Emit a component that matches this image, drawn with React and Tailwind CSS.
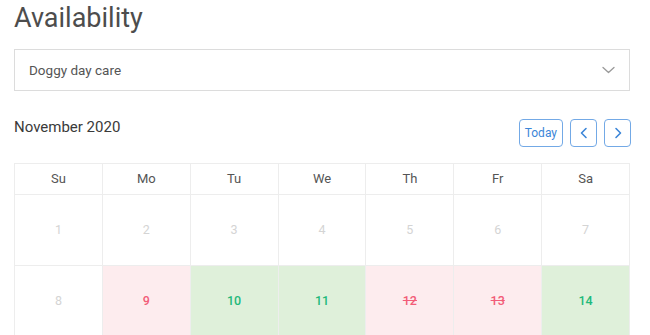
import React from 'react';

const days = ['Su', 'Mo', 'Tu', 'We', 'Th', 'Fr', 'Sa'];

const weeks = [
    [
        { n: 1, s: 'off' }, { n: 2, s: 'off' }, { n: 3, s: 'off' }, { n: 4, s: 'off' },
        { n: 5, s: 'off' }, { n: 6, s: 'off' }, { n: 7, s: 'off' },
    ],
    [
        { n: 8, s: 'off' }, { n: 9, s: 'busy' }, { n: 10, s: 'free' }, { n: 11, s: 'free' },
        { n: 12, s: 'full' }, { n: 13, s: 'full' }, { n: 14, s: 'free' },
    ],
];

const cellStyle = {
    off: 'bg-white text-[#d4d4d4]',
    busy: 'bg-[#fdecee] text-[#f25c78] font-medium',
    full: 'bg-[#fdecee] text-[#f25c78] font-medium line-through',
    free: 'bg-[#dff0da] text-[#1fb97a] font-medium',
};

const Chevron = ({ dir }) => (
    <svg width="10" height="12" viewBox="0 0 10 12" fill="none" stroke="currentColor" strokeWidth="1.6" strokeLinecap="round" strokeLinejoin="round">
        {dir === 'left' ? <path d="M7 1.5 2.5 6 7 10.5" /> : <path d="M3 1.5 7.5 6 3 10.5" />}
    </svg>
);

const App = () => {
    return (
        <div className="w-[650px] h-[335px] overflow-hidden bg-white font-['Roboto',sans-serif]">
            <div className="ml-[14px] w-[616px]">
                <h1 className="text-[27px] leading-[36px] text-[#4d4d4d]">Availability</h1>

                <div className="mt-[13px] h-[42px] border border-[#dcdcdc] flex items-center justify-between pl-[14px] pr-[14px]">
                    <span className="text-[13.5px] text-[#555]">Doggy day care</span>
                    <svg width="13" height="8" viewBox="0 0 13 8" fill="none" stroke="#999" strokeWidth="1.3" strokeLinecap="round" strokeLinejoin="round">
                        <path d="M1 1.5 6.5 6.5 12 1.5" />
                    </svg>
                </div>

                <div className="mt-[28px] flex items-start justify-between">
                    <h2 className="text-[15px] leading-[20px] text-[#3a3a3a] mt-[-2px]">November 2020</h2>
                    <div className="flex gap-[7px] mr-[-1px]">
                        <button className="h-[28px] px-[5px] rounded-[4px] border border-[#73a9e6] text-[#3c86d8] text-[12px]">Today</button>
                        <button className="h-[28px] w-[27px] rounded-[4px] border border-[#73a9e6] text-[#3c86d8] flex items-center justify-center"><Chevron dir="left" /></button>
                        <button className="h-[28px] w-[27px] rounded-[4px] border border-[#73a9e6] text-[#3c86d8] flex items-center justify-center"><Chevron dir="right" /></button>
                    </div>
                </div>

                <div className="mt-[16px] border-l border-t border-[#ededed]">
                    <div className="grid grid-cols-7">
                        {days.map((d) => (
                            <div key={d} className="h-[31px] border-r border-b border-[#ededed] flex items-center justify-center text-[13px] text-[#555]">{d}</div>
                        ))}
                    </div>
                    {weeks.map((w, i) => (
                        <div key={i} className="grid grid-cols-7">
                            {w.map((c) => (
                                <div key={c.n} className={`h-[71px] border-r border-b border-[#ededed] flex items-center justify-center text-[12.5px] ${cellStyle[c.s]}`}>{c.n}</div>
                            ))}
                        </div>
                    ))}
                </div>
            </div>
        </div>
    );
};

export default App;
